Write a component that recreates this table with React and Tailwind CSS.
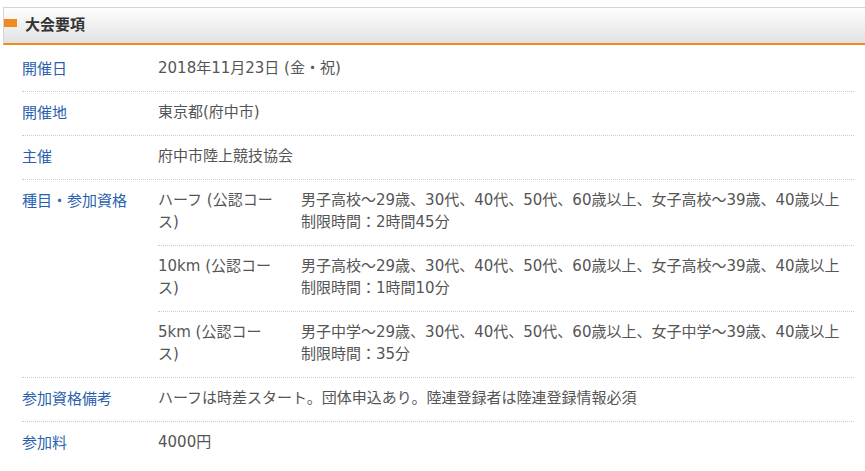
import React from "react";

const font = { fontFamily: '"DejaVu Sans", "Noto Sans CJK JP", "Noto Sans", sans-serif' };
const cjk = { fontFamily: '"Noto Sans CJK JP", "Noto Sans", sans-serif' };

const courses = [
  {
    name: ["ハーフ (公認コー", "ス)"],
    detail: "男子高校～29歳、30代、40代、50代、60歳以上、女子高校～39歳、40歳以上",
    limit: "制限時間：2時間45分",
  },
  {
    name: ["10km (公認コー", "ス)"],
    detail: "男子高校～29歳、30代、40代、50代、60歳以上、女子高校～39歳、40歳以上",
    limit: "制限時間：1時間10分",
  },
  {
    name: ["5km (公認コー", "ス)"],
    detail: "男子中学～29歳、30代、40代、50代、60歳以上、女子中学～39歳、40歳以上",
    limit: "制限時間：35分",
  },
];

function Row({ label, children, last }) {
  return (
    <div className={"flex " + (last ? "" : "border-b border-dotted border-[#cccccc]")}>
      <div className="w-[136px] shrink-0 pt-[9px] pb-[12px] text-[#2a5fae]" style={cjk}>{label}</div>
      <div className="flex-1 pt-[9px] pb-[12px] text-[#555555]">{children}</div>
    </div>
  );
}

export default function App() {
  return (
    <div
      className="w-[865px] h-[471px] overflow-hidden bg-white pl-[3px] pt-[7px] text-[15px] leading-[22px]"
      style={font}
    >
      <div className="relative h-[38px] border-t border-l border-[#d4d4d4] border-b-2 border-b-[#f08a1e] bg-gradient-to-b from-[#fefefe] to-[#e2e2e2] flex items-start">
        <span className="absolute left-0 top-[11px] w-[13px] h-[8px] bg-[#f08a1e]"></span>
        <span className="ml-[21px] mt-[6px] font-bold text-[15px] text-[#333333] leading-[20px]" style={cjk}>大会要項</span>
      </div>

      <div className="ml-[19px] mr-[11px] mt-[3px]">
        <Row label="開催日">2018年11月23日 (金・祝)</Row>
        <Row label="開催地">東京都(府中市)</Row>
        <Row label="主催">府中市陸上競技協会</Row>
        <div className="flex border-b border-dotted border-[#cccccc]">
          <div className="w-[136px] shrink-0 pt-[9px] pb-[12px] text-[#2a5fae]" style={cjk}>種目・参加資格</div>
          <div className="flex-1 text-[#555555]">
            {courses.map((c, i) => (
              <div
                key={i}
                className={
                  "flex pt-[9px] pb-[12px] " +
                  (i < courses.length - 1 ? "border-b border-dotted border-[#cccccc]" : "")
                }
              >
                <div className="w-[143px] shrink-0 pr-[10px]">
                  <div className="whitespace-nowrap">{c.name[0]}</div>
                  <div>{c.name[1]}</div>
                </div>
                <div className="flex-1">
                  <div className="whitespace-nowrap">{c.detail}</div>
                  <div>{c.limit}</div>
                </div>
              </div>
            ))}
          </div>
        </div>
        <Row label="参加資格備考">ハーフは時差スタート。団体申込あり。陸連登録者は陸連登録情報必須</Row>
        <Row label="参加料" last>4000円</Row>
      </div>
    </div>
  );
}
